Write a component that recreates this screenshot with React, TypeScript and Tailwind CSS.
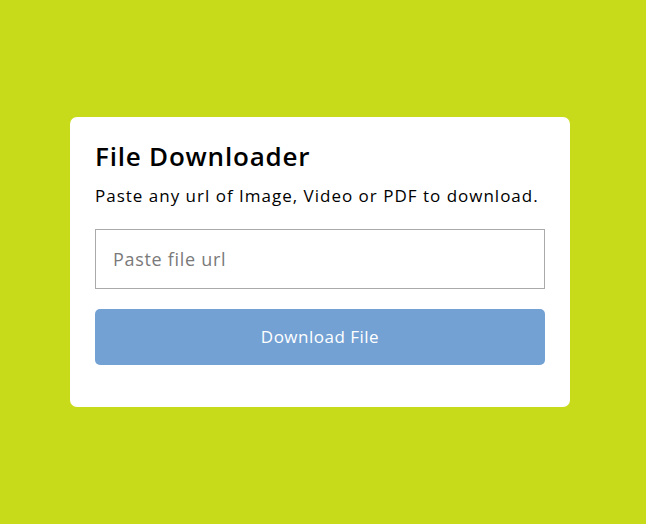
export default function App() {
    return (
        <div
            className="flex min-h-screen items-center justify-center bg-[#c8db1b] pr-[6px]"
            style={{ fontFamily: "'Open Sans', 'Liberation Sans', sans-serif" }}
        >
            <div className="flex h-[290px] w-[500px] flex-col rounded-[7px] bg-white px-[25px] pt-[22px]">
                <h1 className="text-[26px] leading-[34px] font-semibold tracking-[0.8px] text-black">File Downloader</h1>
                <p className="mt-[10px] text-[17px] leading-[26px] tracking-[1px] text-black">Paste any url of Image, Video or PDF to download.</p>
                <input
                    type="text"
                    placeholder="Paste file url"
                    className="mt-[20px] h-[60px] w-full border border-[#aaaaaa] px-[17px] text-[18px] tracking-[0.7px] text-black outline-none placeholder:text-[#7a7a7a]"
                />
                <button className="mt-[20px] h-[56px] w-full rounded-[5px] bg-[#73a1d4] text-[17px] tracking-[0.5px] text-white">
                    Download File
                </button>
            </div>
        </div>
    );
}
